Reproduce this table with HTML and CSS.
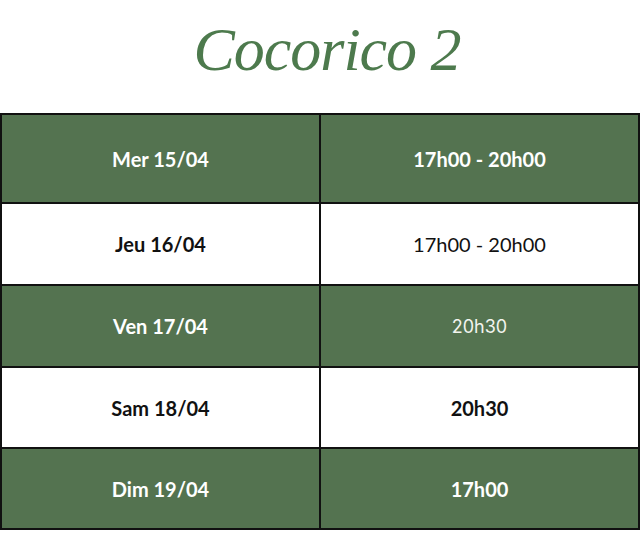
FILE: index.html
```html
<!DOCTYPE html>
<html lang="fr">
<head>
<meta charset="utf-8">
<title>Cocorico 2</title>
<link rel="stylesheet" href="styles.css">
</head>
<body>
<header class="head">
  <h1 class="title">Cocorico 2</h1>
</header>
<div class="grid">
  <div class="cell green bold">Mer 15/04</div>
  <div class="cell green bold">17h00 - 20h00</div>
  <div class="cell white bold">Jeu 16/04</div>
  <div class="cell white">17h00 - 20h00</div>
  <div class="cell green bold">Ven 17/04</div>
  <div class="cell green alt">20h30</div>
  <div class="cell white bold">Sam 18/04</div>
  <div class="cell white bold">20h30</div>
  <div class="cell green bold">Dim 19/04</div>
  <div class="cell green bold">17h00</div>
</div>
</body>
</html>
```
FILE: styles.css
```css
html, body {
  margin: 0;
  padding: 0;
  background: #ffffff;
}
.head {
  height: 113px;
  display: flex;
  justify-content: center;
  align-items: flex-start;
}
.title {
  margin: 14px 0 0 14px;
  font-family: "Liberation Serif", serif;
  font-style: italic;
  font-weight: normal;
  font-size: 62px;
  line-height: 70px;
  letter-spacing: -1px;
  color: #4d7a4d;
}
.grid {
  box-sizing: border-box;
  display: grid;
  grid-template-columns: 1fr 1fr;
  grid-template-rows: 89px 82px 82px 81px 81px;
  border-top: 2px solid #111;
  border-left: 2px solid #111;
  width: 640px;
}
.cell {
  border-right: 2px solid #111;
  border-bottom: 2px solid #111;
  display: flex;
  align-items: center;
  justify-content: center;
  font-family: "Lato", sans-serif;
  font-size: 20px;
  font-weight: 400;
}
.green {
  background: #547350;
  color: #ffffff;
}
.white {
  background: #ffffff;
  color: #111111;
}
.bold {
  font-weight: 700;
}
.alt {
  font-family: "Inter", sans-serif;
  font-weight: 400;
  font-size: 18px;
  color: #f2f4ee;
}
```
